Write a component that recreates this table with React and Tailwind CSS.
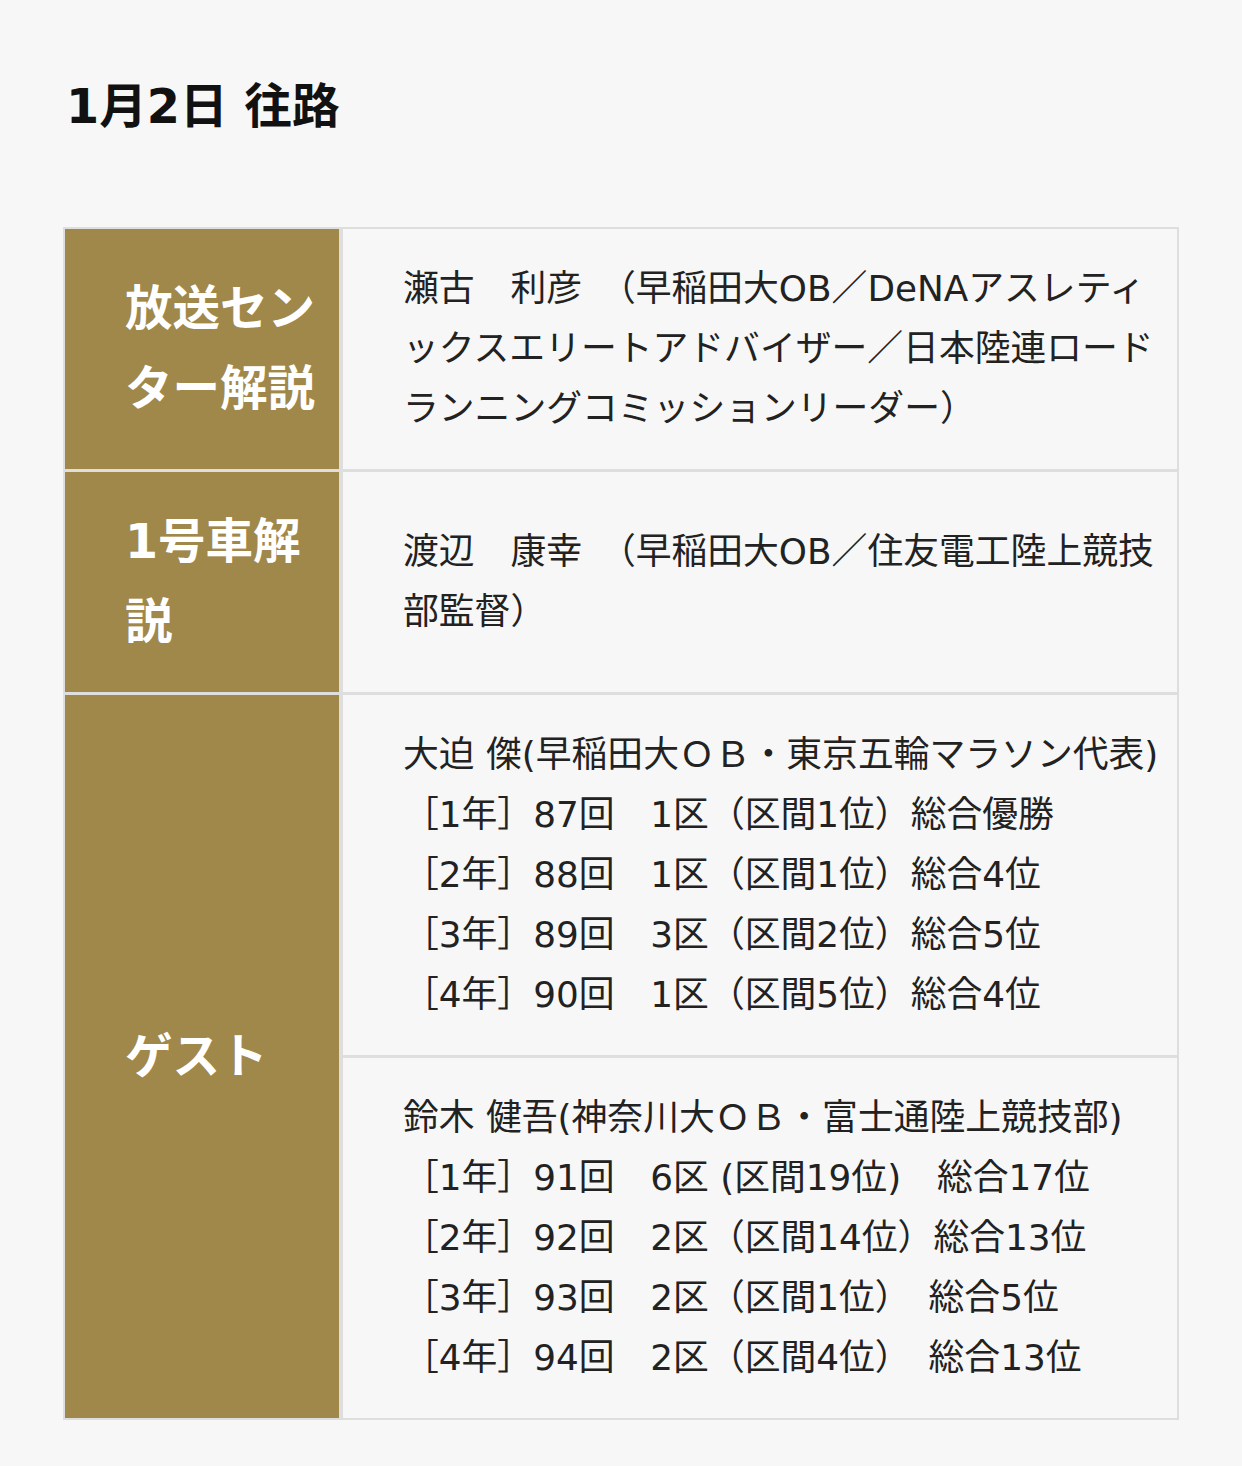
const FONT = { fontFamily: '"DejaVu Sans", "Noto Sans CJK JP", sans-serif' };

const ROWS = [
  {
    label: ["放送セン", "ター解説"],
    cells: [
      [
        "瀬古　利彦　（早稲田大OB／DeNAアスレティ",
        "ックスエリートアドバイザー／日本陸連ロード",
        "ランニングコミッションリーダー）",
      ],
    ],
  },
  {
    label: ["1号車解", "説"],
    cells: [["渡辺　康幸　（早稲田大OB／住友電工陸上競技", "部監督）"]],
  },
  {
    label: ["ゲスト"],
    cells: [
      [
        "大迫 傑(早稲田大ＯＢ・東京五輪マラソン代表)",
        "［1年］87回　1区（区間1位）総合優勝",
        "［2年］88回　1区（区間1位）総合4位",
        "［3年］89回　3区（区間2位）総合5位",
        "［4年］90回　1区（区間5位）総合4位",
      ],
      [
        "鈴木 健吾(神奈川大ＯＢ・富士通陸上競技部)",
        "［1年］91回　6区 (区間19位)　総合17位",
        "［2年］92回　2区（区間14位）総合13位",
        "［3年］93回　2区（区間1位）　総合5位",
        "［4年］94回　2区（区間4位）　総合13位",
      ],
    ],
  },
];

function Cell({ lines }) {
  return (
    <div className="flex flex-1 flex-col justify-center bg-[#f7f7f7] py-[30px] pl-[60px] text-[35.8px] leading-[60px] text-[#222]">
      {lines.map((l) => (
        <div key={l} className="whitespace-pre">
          {l}
        </div>
      ))}
    </div>
  );
}

export default function App() {
  return (
    <div className="min-h-[1466px] bg-[#f7f7f7] pt-[72px]" style={FONT}>
      <h1 className="ml-[66px] text-[47.7px] font-bold leading-[69px] text-[#111]">
        1月2日 往路
      </h1>
      <div className="mt-[86px] ml-[63px] flex w-[1116px] flex-col gap-[3px] bg-[#dedede] p-[2px]">
        {ROWS.map((row) => (
          <div key={row.label.join("")} className="flex gap-[4px]">
            <div className="flex w-[274px] shrink-0 flex-col justify-center bg-[#a0874a] py-[30px] pl-[60px] text-[47.5px] font-bold leading-[80px] text-white">
              {row.label.map((l) => (
                <div key={l}>{l}</div>
              ))}
            </div>
            <div className="flex flex-1 flex-col gap-[3px]">
              {row.cells.map((c) => (
                <Cell key={c[0]} lines={c} />
              ))}
            </div>
          </div>
        ))}
      </div>
    </div>
  );
}
